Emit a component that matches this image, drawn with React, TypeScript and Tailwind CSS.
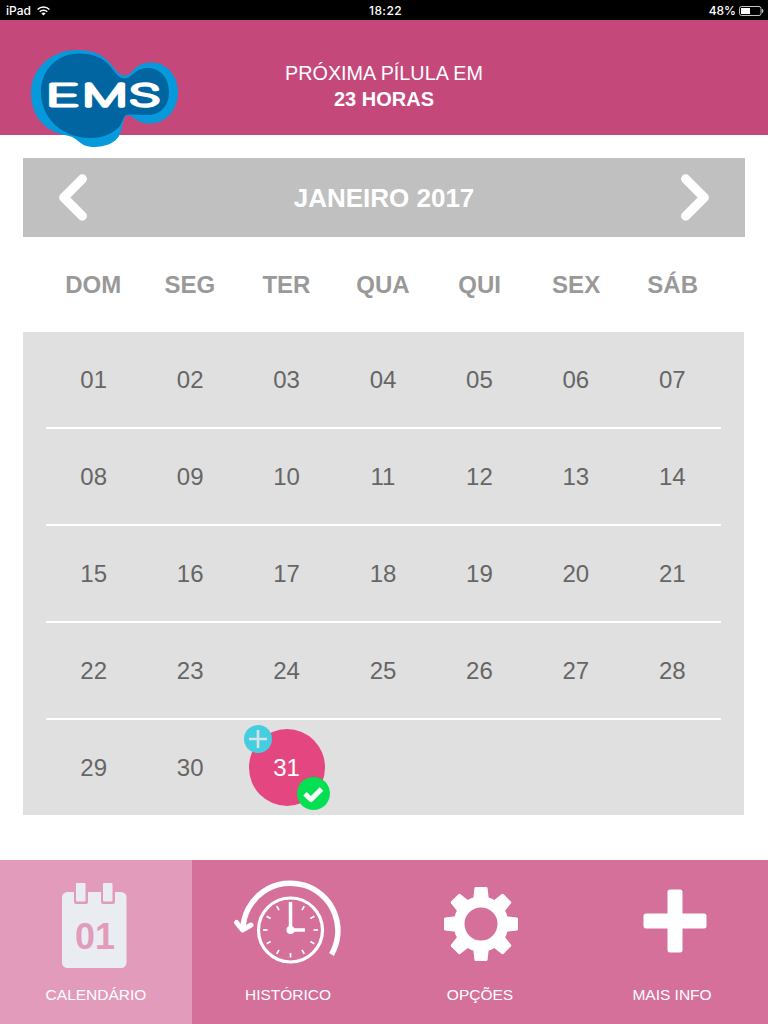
import type { ReactNode } from 'react';
import { clsx } from 'clsx';

interface NavItem {
  label: string;
  icon: ReactNode;
  active?: boolean;
}

const weekdays = ['DOM', 'SEG', 'TER', 'QUA', 'QUI', 'SEX', 'SÁB'];

const weeks = [
  ['01', '02', '03', '04', '05', '06', '07'],
  ['08', '09', '10', '11', '12', '13', '14'],
  ['15', '16', '17', '18', '19', '20', '21'],
  ['22', '23', '24', '25', '26', '27', '28'],
  ['29', '30', '31', '', '', '', ''],
];

const SELECTED = '31';

const clockTicks = [30, 60, 90, 120, 150, 180, 210, 240, 270, 300, 330];
const gearTeeth = [0, 45, 90, 135, 180, 225, 270, 315];

// Each letter of the wordmark is widened on its own
const logoLetters = [
  { letter: 'E', transform: 'translate(45.4 105.5) scale(1.95 1)' },
  { letter: 'M', transform: 'translate(82.1 105.5) scale(1.71 1)' },
  { letter: 'S', transform: 'translate(128.8 105.5) scale(1.74 1)' },
];

const StatusBar = () => (
  <div className="grid h-5 grid-cols-3 items-center bg-black font-['Inter',sans-serif] text-[12px] font-medium leading-5 text-white">
    <div className="flex items-center gap-1.5 pl-1.5 pt-px">
      <span>iPad</span>
      <svg className="h-[10px] w-[13px]" viewBox="0 0 13 10" fill="none" stroke="white" strokeWidth="1.5">
        <path d="M0.6 3.5A8.4 8.4 0 0 1 12.4 3.5" />
        <path d="M2.7 5.7A5.4 5.4 0 0 1 10.3 5.7" />
        <path d="M6.5 9.6L4.4 7.5A3 3 0 0 1 8.6 7.5Z" fill="white" stroke="none" />
      </svg>
    </div>
    <span className="pl-[3px] pt-px text-center tracking-[0.4px]">18:22</span>
    <div className="flex items-center justify-end gap-[3px] pr-1 pt-px">
      <span>48%</span>
      <svg className="h-[10px] w-[25px]" viewBox="0 0 25 10">
        <rect x="0.5" y="0.5" width="21.5" height="9" rx="2" fill="none" stroke="#c4c4c4" />
        <rect x="2" y="2" width="9" height="6" fill="white" />
        <path d="M23.3 3.2Q24.8 5 23.3 6.8Z" fill="#e8e8e8" stroke="#e8e8e8" strokeWidth="0.6" />
      </svg>
    </div>
  </div>
);

const Logo = () => (
  <svg className="h-[98px] w-[149px]" viewBox="30 49 149 98">
    <path
      fill="#0699dc"
      d="M31 93C31 68 52 50 77 50C92 50 101 54 108 61C115 68 118 75.500 125 75.500C133 75.500 134 62.500 151 62.500C167 62.500 178 76 178 92C178 110 166 123.500 150 123.500C136 123.500 134 115.500 128 115.500C122 115.500 124 126 119 136C115 143 105 147 94 147C79 147 78 137 67 135.500C45 132 31 116 31 93Z"
    />
    <path
      fill="#0065a1"
      d="M41 92C41 69 58 53.500 79 53.500C93 53.500 102 57.500 109 65C115 72 118 78.500 125 78.500C132 78 135 68 148 68C160 68 169 78 169 92C169 106 160 115 148 115C136 115 134 114.500 128 114.500C122 115 124 122 118 128C110 135 101 138 90 138C62 138 41 118 41 92Z"
    />
    {logoLetters.map(({ letter, transform }) => (
      <text
        key={letter}
        transform={transform}
        fill="white"
        stroke="white"
        strokeWidth="4.800"
        strokeLinejoin="round"
        vectorEffect="non-scaling-stroke"
        className="font-['Inter',sans-serif] text-[30px] font-thin"
      >
        {letter}
      </text>
    ))}
  </svg>
);

const Header = () => (
  <header className="flex h-[115px] bg-[#c5487b] pl-[30px] pt-[29px]">
    <Logo />
    <div className="ml-[105px] w-[200px] pt-[11px] text-center text-[20px] leading-[26px] text-white">
      <p className="whitespace-nowrap text-[19.8px]">PRÓXIMA PÍLULA EM</p>
      <p className="font-bold">23 HORAS</p>
    </div>
  </header>
);

const Arrow = ({ flipped }: { flipped?: boolean }) => (
  <svg className={clsx('h-[48px] w-[29px]', flipped && '-scale-x-100')} viewBox="0 0 29 48" fill="none">
    <path d="M24.300 5L5.800 23.500L24.300 42" stroke="white" strokeWidth="9.300" strokeLinecap="round" strokeLinejoin="round" />
  </svg>
);

const SelectedDay = ({ day }: { day: string }) => (
  <div className="relative flex h-[77px] w-[76px] items-center justify-center rounded-full bg-[#e4477f] text-white">
    {day}
    {/* Note badge */}
    <svg className="absolute -left-[5px] -top-[4px] h-7 w-7" viewBox="0 0 28 28">
      <circle cx="14" cy="14" r="14" fill="#45cde0" />
      <path d="M5 14H23M14 5V23" stroke="#d5e5e7" strokeWidth="2.600" />
    </svg>
    {/* Taken badge */}
    <svg className="absolute -bottom-[4px] -right-[5px] h-[33px] w-[33px]" viewBox="0 0 33 33">
      <circle cx="16.500" cy="16.500" r="16.500" fill="#05e052" />
      <path d="M8 16.800L14 22.500L24.500 12" fill="none" stroke="white" strokeWidth="5" strokeLinejoin="round" />
    </svg>
  </div>
);

const Calendar = () => (
  <main className="flex flex-col px-[23px] pt-[23px]">
    <div className="flex h-[79px] items-center justify-between bg-[#c0c0c0] px-[35px]">
      <Arrow />
      <h1 className="pt-0.5 text-[26px] font-bold text-white">JANEIRO 2017</h1>
      <Arrow flipped />
    </div>

    <div className="grid h-[95px] grid-cols-7 items-center pl-[22px] pr-[24px] text-center text-[24px] font-bold text-[#999999]">
      {weekdays.map((name) => (
        <span key={name}>{name}</span>
      ))}
    </div>

    <div className="mr-px h-[483px] bg-[#e0e0e0] px-[23px] text-[24px] text-[#666666]">
      {weeks.map((week, index) => (
        <div
          key={week[0]}
          className={clsx('grid grid-cols-7 items-center', index < weeks.length - 1 ? 'h-[97px] border-b-2 border-white' : 'h-[95px]')}
        >
          {week.map((day, column) => (
            <div key={column} className="-ml-px flex justify-center">
              {day === SELECTED ? <SelectedDay day={day} /> : day}
            </div>
          ))}
        </div>
      ))}
    </div>
  </main>
);

const CalendarIcon = () => (
  <svg className="h-[90px] w-[70px]" viewBox="59 880 70 90">
    <rect x="62" y="892" width="64.500" height="76" rx="5.500" fill="#e9edf2" />
    <rect x="74" y="880" width="14" height="24" rx="2" fill="#e29bba" />
    <rect x="101" y="880" width="14" height="24" rx="2" fill="#e29bba" />
    <rect x="76" y="883" width="9.500" height="18.500" rx="1" fill="#e9edf2" />
    <rect x="103" y="883" width="9.500" height="18.500" rx="1" fill="#e9edf2" />
    <text x="95" y="949" textAnchor="middle" fill="#e29bba" className="text-[36px] font-bold">
      01
    </text>
  </svg>
);

const HistoryIcon = () => (
  <svg className="h-[90px] w-[112px]" viewBox="232 877 112 90" fill="none" stroke="white">
    <path d="M331.500 954.500A47.500 47.500 0 1 0 243 928" strokeWidth="5.500" />
    <path d="M236.500 922.500L242.500 930L251 925" strokeWidth="5" strokeLinecap="round" strokeLinejoin="round" />
    <circle cx="290.500" cy="930" r="32" strokeWidth="3.200" />
    {clockTicks.map((angle) => (
      <path key={angle} d="M290.500 902.500V907" strokeWidth="1.700" transform={`rotate(${angle} 290.500 930)`} />
    ))}
    <path d="M290.500 902V930H305" strokeWidth="3.500" />
    <circle cx="290.500" cy="930" r="4" fill="white" stroke="none" />
  </svg>
);

const GearIcon = () => (
  <svg className="h-[76px] w-[76px]" viewBox="-38 -38 76 76">
    <circle r="22" fill="none" stroke="white" strokeWidth="11" />
    {gearTeeth.map((angle) => (
      <path
        key={angle}
        d="M-8 -23L-6.500 -36Q-6.300 -37 -5.300 -37H5.300Q6.300 -37 6.500 -36L8 -23Z"
        fill="white"
        transform={`rotate(${angle})`}
      />
    ))}
  </svg>
);

const PlusIcon = () => (
  <svg className="h-[64px] w-[64px]" viewBox="0 0 64 64" fill="white">
    <rect x="24.500" y="0.500" width="15" height="63" rx="2.500" />
    <rect x="0.500" y="24.500" width="63" height="15" rx="2.500" />
  </svg>
);

const navItems: NavItem[] = [
  { label: 'CALENDÁRIO', icon: <div className="-ml-1 pt-[20px]"><CalendarIcon /></div>, active: true },
  { label: 'HISTÓRICO', icon: <div className="pt-[17px]"><HistoryIcon /></div> },
  { label: 'OPÇÕES', icon: <div className="pl-px pt-[26px]"><GearIcon /></div> },
  { label: 'MAIS INFO', icon: <div className="pl-[5px] pt-[29px]"><PlusIcon /></div> },
];

const BottomNav = () => (
  <nav className="grid h-[164px] grid-cols-4 bg-[#d47099] text-[15.5px] text-white">
    {navItems.map(({ label, icon, active }) => (
      <a key={label} className={clsx('flex flex-col items-center', active && 'bg-[#e29bba]')}>
        <div className="h-[124px]">{icon}</div>
        <span className="leading-[22px]">{label}</span>
      </a>
    ))}
  </nav>
);

const App = () => {
  return (
    <div className="flex h-[1024px] w-[768px] flex-col overflow-hidden bg-white font-['Liberation_Sans',Arial,sans-serif]">
      <StatusBar />
      <Header />
      <Calendar />
      <div className="mt-auto">
        <BottomNav />
      </div>
    </div>
  );
};

export default App;
